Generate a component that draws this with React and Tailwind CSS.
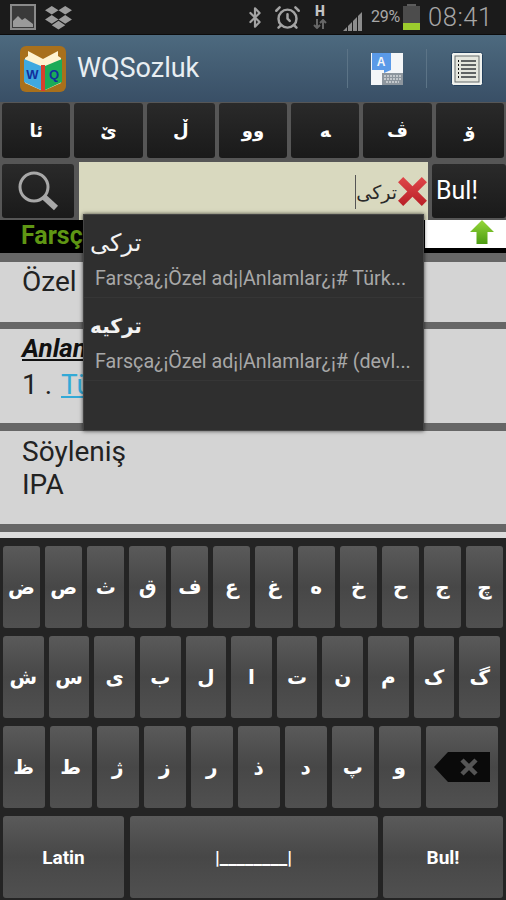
import { AlarmClock, Bluetooth } from 'lucide-react';

const ARABIC = "font-['DejaVu_Sans',sans-serif]";
const TOP_KEYS = ['ئا', 'ێ', 'ڵ', 'وو', '\u200dه', 'ڤ', 'ۆ'];
const ROW_1 = ['ض', 'ص', 'ث', 'ق', 'ف', 'ع', 'غ', 'ه', 'خ', 'ح', 'ج', 'چ'];
const ROW_2 = ['ش', 'س', 'ی', 'ب', 'ل', 'ا', 'ت', 'ن', 'م', 'ک', 'گ'];
const ROW_3 = ['ظ', 'ط', 'ژ', 'ز', 'ر', 'ذ', 'د', 'پ', 'و'];

function StatusBar() {
  return (
    <div className="h-[35px] bg-[#1b1b1b] border-b border-[#0c0c0c] flex items-center text-[#a3a3a3] shrink-0">
      {/* gallery */}
      <svg viewBox="0 0 26 26" className="w-[26px] h-[26px] ml-[10px]">
        <rect x="1" y="1" width="24" height="24" fill="#3a3a3a" stroke="#8a8a8a" strokeWidth="2" />
        <path d="M3 23v-6l5-5 4 4 3-2 8 6v3z" fill="#9a9a9a" />
      </svg>
      {/* dropbox */}
      <svg viewBox="0 0 28 26" className="w-[27px] h-[25px] ml-[9px]" fill="#9c9c9c">
        <path d="M7 1l7 4.500-7 4.500-7-4.500zM21 1l7 4.500-7 4.500-7-4.500zM7 10.500l7 4.500-7 4.500-7-4.500zM21 10.500l7 4.500-7 4.500-7-4.500zM7 21l7-4.500 7 4.500-7 4.500z" />
      </svg>
      <Bluetooth className="w-[22px] h-[25px] ml-[172px]" strokeWidth={2.4} />
      <AlarmClock className="w-[27px] h-[27px] ml-[8px]" strokeWidth={2.2} />
      <div className="w-[16px] ml-[11px] flex flex-col items-center">
        <span className="text-[14px] font-black text-[#c4c4c4] font-['Roboto',sans-serif] leading-[13px]">H</span>
        <svg viewBox="0 0 14 10" className="w-[14px] h-[10px] mt-[1px]" fill="none" stroke="#666666" strokeWidth="2">
          <path d="M4 0v9M1 6l3 3 3-3M10 10V1M7 4l3-3 3 3" />
        </svg>
      </div>
      {/* signal */}
      <svg viewBox="0 0 20 22" className="w-[20px] h-[22px] ml-[15px] mt-[6px]" fill="#8c8c8c">
        <path d="M0 22l4-4v4zM5 22v-5l4-4v9zM10 22v-10l4-4v14zM15 22v-15l4-4v19z" />
      </svg>
      <span className="ml-[8px] text-[16px] text-[#a8a8a8] font-['Roboto',sans-serif] tracking-[-0.2px]">29%</span>
      {/* battery */}
      <div className="w-[17px] h-[26px] ml-[3px] flex flex-col items-center">
        <div className="w-[9px] h-[2px] bg-[#5c5c5c]" />
        <div className="w-[17px] h-[24px] bg-[#4c4c4c] flex flex-col justify-end">
          <div className="h-[7px] bg-[#9ccc2e]" />
        </div>
      </div>
      <span className="ml-[8px] text-[25.500px] text-[#a6a6a6] font-light font-['Roboto',sans-serif] tracking-[0.5px]">08:41</span>
    </div>
  );
}

function AppLogo() {
  return (
    <svg viewBox="0 0 46 46" className="w-[46px] h-[46px] ml-[20px]">
      <rect width="46" height="46" rx="6" fill="#a8701c" />
      <path d="M8 5l15 8 15-8v5l3 2v25l-18 8-18-8V12l3-2z" fill="#fff3d0" />
      <path d="M4 13l17 7v24L4 36z" fill="#3fa9e0" />
      <path d="M25 20l17-7v23l-17 8z" fill="#1cab58" />
      <path d="M21 19h4v26h-4z" fill="#d9402c" />
      <text x="12.500" y="33" textAnchor="middle" fontSize="13" fontWeight="700" fill="#12309c" fontFamily="Liberation Sans, sans-serif">W</text>
      <text x="34" y="33" textAnchor="middle" fontSize="13" fontWeight="700" fill="#12309c" fontFamily="Liberation Sans, sans-serif">Q</text>
    </svg>
  );
}

function ActionBar() {
  return (
    <div className="h-[67px] bg-gradient-to-b from-[#4d6a7f] to-[#394f66] flex items-center shrink-0">
      <AppLogo />
      <span className="ml-[11px] text-[27px] text-[#e8eef2] font-['Roboto',sans-serif]">WQSozluk</span>
      <div className="ml-auto w-px h-[39px] bg-[#5c7487]" />
      {/* input language */}
      <svg viewBox="0 0 32 32" className="w-[32px] h-[32px] ml-[23px]">
        <rect width="32" height="32" fill="#f4f6f8" />
        <path d="M1 0h19v17l-7 3v-3H1z" fill="#5a9ae8" />
        <text x="10" y="13" textAnchor="middle" fontSize="12" fontWeight="700" fill="#f4f6f8" fontFamily="Liberation Sans, sans-serif">A</text>
        <rect x="11" y="20" width="21" height="12" fill="#8d969e" />
        <path d="M13 23h17M13 26h17M15 29h13" stroke="#d5d9dc" strokeWidth="1.500" strokeDasharray="2 1" />
      </svg>
      <div className="ml-[23px] w-px h-[39px] bg-[#5c7487]" />
      {/* list */}
      <svg viewBox="0 0 32 34" className="w-[32px] h-[34px] ml-[24px] mr-[23px]">
        <rect x="0.500" y="0.500" width="31" height="33" rx="2" fill="#f0f2ee" stroke="#24405c" />
        <rect x="4" y="4" width="24" height="26" fill="#e4e6de" stroke="#666c6c" />
        <path d="M10 9h15M10 13h15M10 17h15M10 21h15M10 25h15" stroke="#33383c" strokeWidth="1.600" />
        <path d="M7 9h1M7 13h1M7 17h1M7 21h1M7 25h1" stroke="#111" strokeWidth="2" />
      </svg>
    </div>
  );
}

function DarkKey({ children, className = '' }) {
  return (
    <div className={`rounded-[3px] bg-gradient-to-b from-[#2a2a2a] to-[#1a1a1a] text-white flex items-center justify-center ${className}`}>
      {children}
    </div>
  );
}

function KeyCap({ label, className = '' }) {
  return (
    <div className={`h-[82px] rounded-[3px] bg-gradient-to-b from-[#5a5a5a] via-[#474747] to-[#505050] text-white flex items-center justify-center ${className}`}>
      {label}
    </div>
  );
}

function SearchRows() {
  return (
    <div className="bg-[#565656] shrink-0">
      <div className="h-[60px] grid grid-cols-7 gap-[4px] px-[2px] pt-[1px] pb-[4px]">
        {TOP_KEYS.map((k) => (
          <DarkKey key={k} className={`${ARABIC} text-[18px] font-bold`}>{k}</DarkKey>
        ))}
      </div>
      <div className="h-[58px] flex items-stretch">
        <DarkKey className="w-[72px] ml-[2px] my-[2px]">
          <svg viewBox="0 0 44 44" className="w-[44px] h-[44px]" fill="none">
            <circle cx="18" cy="18" r="14" stroke="#a8a8a8" strokeWidth="3" />
            <path d="M28 28l12 11" stroke="#a8a8a8" strokeWidth="6" />
          </svg>
        </DarkKey>
        <div className="ml-[5px] w-[349px] bg-[#d9d9bf] flex items-center justify-end">
          <div className="w-px h-[34px] bg-[#555555] mt-[2px]" />
          <span className={`${ARABIC} text-[19px] leading-[24px] text-[#2a2a2a] mt-[2px]`} dir="rtl">ترکی</span>
          <svg viewBox="0 0 30 30" className="w-[31px] h-[31px] mt-[1px]">
            <defs>
              <linearGradient id="clearRed" x1="0" y1="0" x2="0" y2="1">
                <stop offset="0" stopColor="#e0474a" />
                <stop offset="1" stopColor="#b81f26" />
              </linearGradient>
            </defs>
            <path d="M6 1l9 9 9-9 5 5-9 9 9 9-5 5-9-9-9 9-5-5 9-9-9-9z" fill="url(#clearRed)" />
          </svg>
        </div>
        <DarkKey className="w-[74px] ml-[4px] my-[2px] text-[25px] text-[#e6e6e6] font-['Roboto',sans-serif] justify-start pl-[4px]">
          Bul!
        </DarkKey>
      </div>
    </div>
  );
}

function TabRow() {
  return (
    <div className="h-[33px] flex bg-black shrink-0 border-b-[5px] border-black">
      <div className="w-[425px] pl-[21px] text-[25px] font-bold text-[#5f9614] leading-[32px] font-['Roboto',sans-serif]">Farsça</div>
      <div className="flex-1 bg-white flex justify-end pr-[12px]">
        <svg viewBox="0 0 24 24" className="w-[24px] h-[24px]">
          <defs>
            <linearGradient id="upGreen" x1="0" y1="0" x2="0" y2="1">
              <stop offset="0" stopColor="#96d83a" />
              <stop offset="1" stopColor="#4c9c12" />
            </linearGradient>
          </defs>
          <path d="M12 0l12 12h-6.500v12h-11V12H0z" fill="url(#upGreen)" />
        </svg>
      </div>
    </div>
  );
}

function Content() {
  return (
    <div className="h-[285px] bg-[#d4d4d4] font-['Roboto',sans-serif] text-[28px] text-[#222222] shrink-0 flex flex-col">
      <div className="h-[9px] bg-[#666666] shrink-0" />
      <div className="h-[60px] px-[22px] leading-[40px] shrink-0">Özel ad</div>
      <div className="h-[7px] bg-[#666666] shrink-0" />
      <div className="h-[94px] px-[22px] pt-[3px] leading-[33px] shrink-0">
        <div className="font-bold italic underline text-[#111111] text-[26px]">Anlamlar</div>
        <div className="mt-[3px]">1 . <span className="ml-[2px] text-[#33a9d6] underline">Türkçe</span></div>
      </div>
      <div className="h-[8px] bg-[#666666] shrink-0" />
      <div className="h-[93px] px-[22px] pt-[4px] leading-[33px] shrink-0">
        <div>Söyleniş</div>
        <div>IPA</div>
      </div>
      <div className="h-[8px] bg-[#666666] shrink-0" />
      <div className="flex-1 bg-[#dcdcdc]" />
    </div>
  );
}

function Suggestions() {
  return (
    <div className="absolute left-[83px] top-[214px] w-[341px] h-[217px] bg-[#2f2f2f] border border-[#444444] shadow-[0_0_4px_rgba(0,0,0,0.7)]">
      <div className="h-[83px] pt-[11px] border-b border-[#363636]">
        <div className={`${ARABIC} text-[24px] text-[#f2f2f2] pl-[6px] leading-[34px] text-left`}>
          <span dir="rtl">ترکی</span>
        </div>
        <div className="mt-[6px] text-[19.700px] text-[#a8a8a8] pl-[11px] leading-[26px] font-['Roboto',sans-serif] whitespace-nowrap">Farsça¿¡Özel ad¡|Anlamlar¿¡# Türk...</div>
      </div>
      <div className="h-[83px] pt-[11px] border-b border-[#363636]">
        <div className={`${ARABIC} text-[20px] font-bold text-[#f2f2f2] pl-[6px] leading-[34px] text-left`}>
          <span dir="rtl">ترکیه</span>
        </div>
        <div className="mt-[6px] text-[19.700px] text-[#a8a8a8] pl-[11px] leading-[26px] font-['Roboto',sans-serif] whitespace-nowrap">Farsça¿¡Özel ad¡|Anlamlar¿¡# (devl...</div>
      </div>
    </div>
  );
}

function Keyboard() {
  const arabicKey = `${ARABIC} text-[20px] font-bold`;
  return (
    <div className="flex-1 bg-[#242424] flex flex-col gap-[8px] pt-[8px] px-[3px] overflow-hidden">
      <div className="grid grid-cols-12 gap-[5px]">
        {ROW_1.map((k) => <KeyCap key={k} label={k} className={arabicKey} />)}
      </div>
      <div className="grid grid-cols-11 gap-[5px] pr-[3px]">
        {ROW_2.map((k) => <KeyCap key={k} label={k} className={arabicKey} />)}
      </div>
      <div className="flex gap-[5.500px] pr-[5px]">
        {ROW_3.map((k) => <KeyCap key={k} label={k} className={`${arabicKey} w-[41.500px] shrink-0`} />)}
        <KeyCap
          className="flex-1"
          label={
            <svg viewBox="0 0 56 30" className="w-[56px] h-[30px]">
              <path d="M0 15L14 0h42v30H14z" fill="#0a0a0a" />
              <path d="M28 8l14 14M42 8L28 22" stroke="#555555" strokeWidth="4.500" />
            </svg>
          }
        />
      </div>
      <div className="flex gap-[5.500px] font-['Roboto',sans-serif] font-bold text-[19px]">
        <KeyCap label="Latin" className="w-[121px] pt-[2px]" />
        <KeyCap className="flex-1 pt-[2px]" label="|________|" />
        <KeyCap label="Bul!" className="w-[120px] pt-[2px]" />
      </div>
    </div>
  );
}

export default function App() {
  return (
    <div className="relative w-[506px] h-[900px] overflow-hidden flex flex-col bg-[#242424]">
      <StatusBar />
      <ActionBar />
      <SearchRows />
      <TabRow />
      <Content />
      <Keyboard />
      <Suggestions />
    </div>
  );
}
